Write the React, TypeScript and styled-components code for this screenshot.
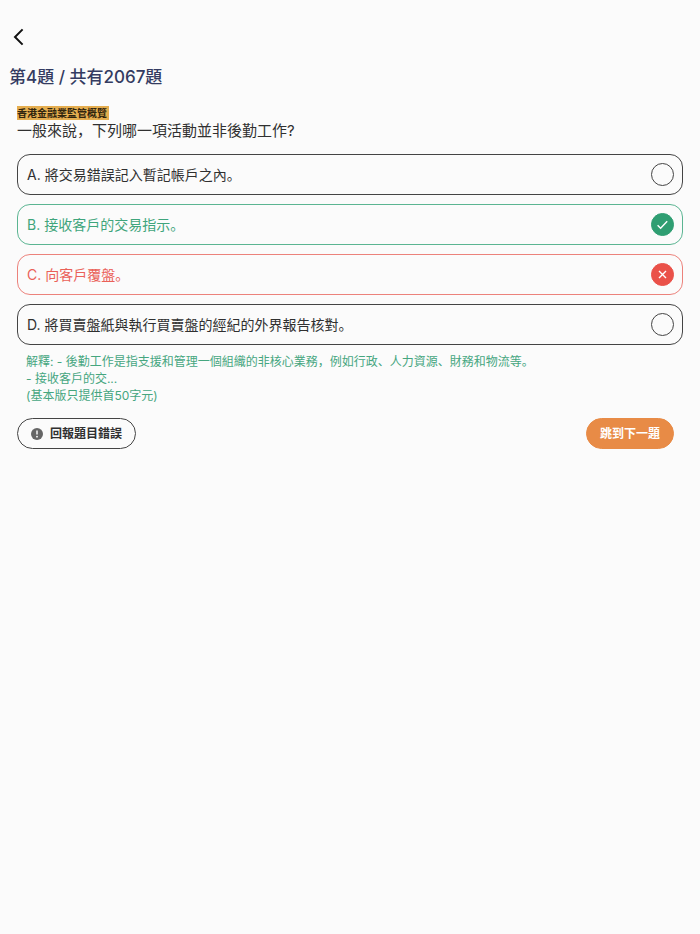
import React, { useState } from 'react';
import styled, { createGlobalStyle } from 'styled-components';

type Status = 'idle' | 'correct' | 'wrong';

const ink = '#303030';
const green = '#2f9e72';

const statusColor: Record<Status, string> = {
  idle: ink,
  correct: '#3fa57c',
  wrong: '#ea6158',
};
const borderColor: Record<Status, string> = {
  idle: '#444444',
  correct: '#5bb592',
  wrong: '#ec827b',
};
const markFill: Record<Status, string> = {
  idle: 'transparent',
  correct: green,
  wrong: '#ea5149',
};

const GlobalStyle = createGlobalStyle`
  *, *::before, *::after { box-sizing: border-box; }
  body {
    margin: 0;
    background: #fbfbfb;
    color: ${ink};
    font-family: Inter, "Noto Sans CJK SC", sans-serif;
  }
  button, input { font: inherit; }
`;

const Page = styled.main`
  padding: 24px 0;
`;

const BackButton = styled.button`
  display: flex;
  margin-left: 8px;
  padding: 2px 0;
  border: 0;
  background: none;
  color: #111111;
  cursor: pointer;
`;

const Progress = styled.h1`
  margin: 15px 9px 17px;
  font-size: 17px;
  line-height: 24px;
  font-weight: 500;
  color: #343b61;
`;

const Content = styled.section`
  padding: 0 17px;
`;

const Topic = styled.span`
  display: block;
  width: fit-content;
  padding-right: 2px;
  background: #e5ae50;
  color: #30240d;
  font-size: 10px;
  line-height: 14px;
  font-weight: 700;
`;

const Options = styled.fieldset`
  display: grid;
  gap: 9px;
  min-width: 0;
  margin: 0;
  padding: 0;
  border: 0;
`;

const Question = styled.legend`
  padding: 0 0 12px;
  font-size: 15px;
  line-height: 22px;
`;

const Option = styled.label<{ $status: Status }>`
  display: flex;
  align-items: center;
  justify-content: space-between;
  gap: 12px;
  min-height: 41px;
  padding: 0 8px 0 9px;
  border: 1px solid ${(p) => borderColor[p.$status]};
  border-radius: 13px;
  color: ${(p) => statusColor[p.$status]};
  font-size: 14px;
  line-height: 20px;
  cursor: pointer;
`;

const Mark = styled.span`
  display: grid;
  flex: none;
  place-items: center;

  > * { grid-area: 1 / 1; }
  > svg { pointer-events: none; }
`;

const Radio = styled.input<{ $status: Status }>`
  appearance: none;
  width: 23px;
  height: 23px;
  margin: 0;
  border: 1px solid ${(p) => (p.$status === 'idle' ? '#444444' : markFill[p.$status])};
  border-radius: 50%;
  background: ${(p) => markFill[p.$status]};
  cursor: pointer;
`;

const Explanation = styled.p`
  margin: 8px 9px 14px;
  color: #46a67f;
  font-size: 12px;
  line-height: 17px;
  white-space: pre-line;
`;

const Actions = styled.footer`
  display: flex;
  align-items: center;
  justify-content: space-between;
  padding-right: 9px;
`;

const PillButton = styled.button<{ $primary?: boolean }>`
  display: flex;
  align-items: center;
  gap: 7px;
  height: 31px;
  padding: 0 13px;
  border: 1px solid ${(p) => (p.$primary ? '#e88b46' : '#444444')};
  border-radius: 16px;
  background: ${(p) => (p.$primary ? '#e88b46' : 'transparent')};
  color: ${(p) => (p.$primary ? '#ffffff' : ink)};
  font-size: 12px;
  line-height: 18px;
  font-weight: 700;
  cursor: pointer;
`;

const options: { id: string; text: string; status: Status }[] = [
  { id: 'A', text: '將交易錯誤記入暫記帳戶之內。', status: 'idle' },
  { id: 'B', text: '接收客戶的交易指示。', status: 'correct' },
  { id: 'C', text: '向客戶覆盤。', status: 'wrong' },
  { id: 'D', text: '將買賣盤紙與執行買賣盤的經紀的外界報告核對。', status: 'idle' },
];

const explanation = `解釋: - 後勤工作是指支援和管理一個組織的非核心業務，例如行政、人力資源、財務和物流等。
- 接收客戶的交...
(基本版只提供首50字元)`;

function StatusIcon({ status }: { status: Status }) {
  if (status === 'idle') return null;
  return (
    <svg width="23" height="23" viewBox="0 0 23 23" fill="none" stroke="#ffffff" strokeWidth="1.4" aria-hidden="true">
      <path d={status === 'correct' ? 'M6.6 12.3 9.6 15.2 16.2 8.2' : 'M8 8 15 15M15 8 8 15'} />
    </svg>
  );
}

export default function App() {
  const [selected, setSelected] = useState('C');

  return (
    <>
      <GlobalStyle />
      <Page lang="zh">
        <BackButton type="button" aria-label="返回">
          <svg width="22" height="22" viewBox="0 0 22 22" fill="none" stroke="currentColor" strokeWidth="2" aria-hidden="true">
            <path d="M14.6 3.4 7 11l7.6 7.6" />
          </svg>
        </BackButton>
        <Progress>第4題 / 共有2067題</Progress>
        <Content>
          <Topic>香港金融業監管概覽</Topic>
          <Options>
            <Question>一般來說，下列哪一項活動並非後勤工作?</Question>
            {options.map((o) => (
              <Option key={o.id} $status={o.status}>
                <span>{`${o.id}. ${o.text}`}</span>
                <Mark>
                  <Radio
                    type="radio"
                    name="answer"
                    value={o.id}
                    $status={o.status}
                    checked={selected === o.id}
                    onChange={() => setSelected(o.id)}
                  />
                  <StatusIcon status={o.status} />
                </Mark>
              </Option>
            ))}
          </Options>
          <Explanation>{explanation}</Explanation>
          <Actions>
            <PillButton type="button">
              <svg width="12" height="12" viewBox="0 0 12 12" aria-hidden="true">
                <circle cx="6" cy="6" r="6" fill="#666666" />
                <path d="M6 2.6v4" stroke="#ffffff" strokeWidth="1.4" />
                <circle cx="6" cy="8.7" r=".9" fill="#ffffff" />
              </svg>
              回報題目錯誤
            </PillButton>
            <PillButton type="button" $primary>
              跳到下一題
            </PillButton>
          </Actions>
        </Content>
      </Page>
    </>
  );
}
